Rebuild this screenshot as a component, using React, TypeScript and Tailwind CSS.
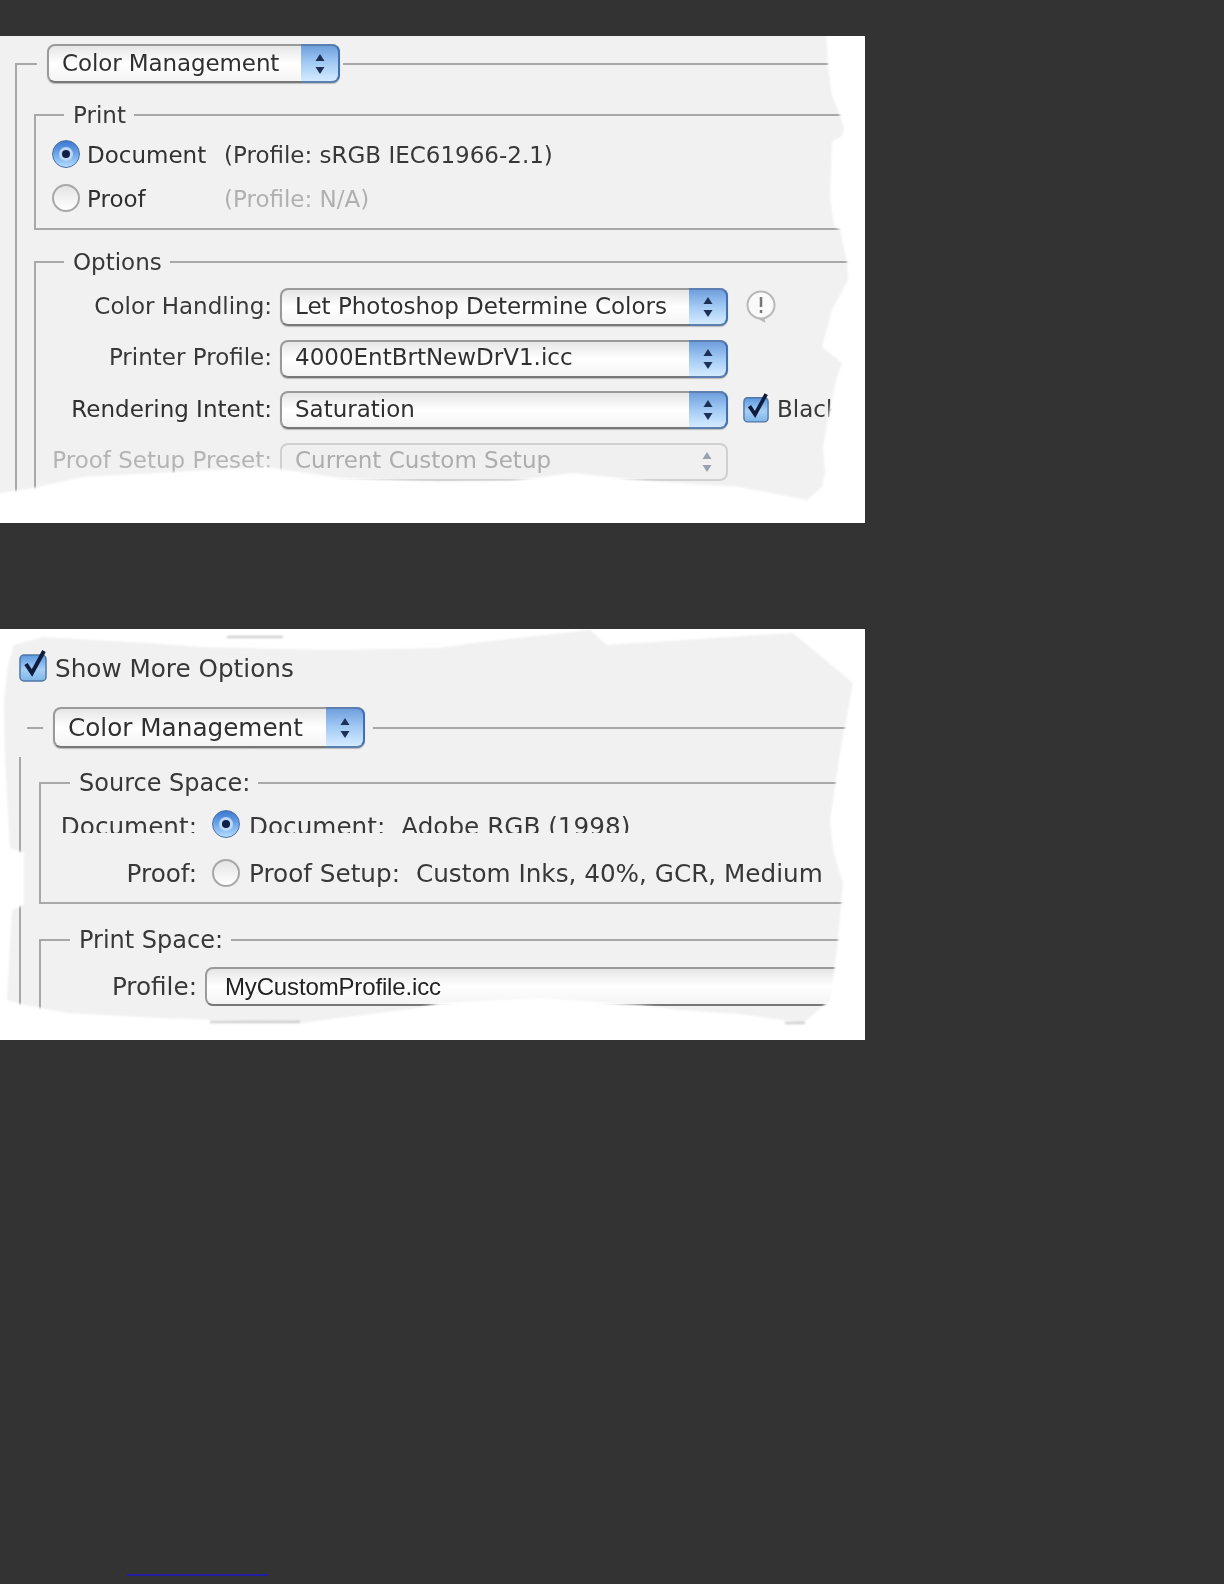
import React from 'react';

const Arrows = ({ dim }: { dim?: boolean }) => (
  <svg width="12" height="26" viewBox="0 0 12 26" className={dim ? 'opacity-40' : ''}>
    <path d="M6 3l4.500 7h-9z" fill="#1c2f55" />
    <path d="M6 23l4.500-7h-9z" fill="#1c2f55" />
  </svg>
);

const Popup = ({ label, disabled, lift, className }: { label: string; disabled?: boolean; lift?: boolean; className: string }) => (
  <div
    className={`flex h-full items-center justify-between rounded-[8px] border-2 ${
      disabled
        ? 'border-[#d0d0d0] bg-[#f0f0f0] text-[#adadad]'
        : 'border-[#9a9a9a] border-b-[#777777] bg-linear-to-b from-[#e6e6e6] via-white to-[#f4f4f4] shadow-[0_1px_1px_#bbbbbb] text-[#303030]'
    } ${className}`}
  >
    <span className={`pl-[13px] whitespace-nowrap ${lift ? '-mt-[2px]' : ''}`}>{label}</span>
    {disabled ? (
      <span className="flex h-full w-[39px] shrink-0 items-center justify-center">
        <Arrows dim />
      </span>
    ) : (
      <span className="-my-[2px] -mr-[2px] flex h-[calc(100%+4px)] w-[39px] shrink-0 items-center justify-center rounded-r-[8px] border-2 border-l-0 border-[#5c7fb0] border-r-[#3f6fb5] bg-linear-to-b from-[#6f9fdc] via-[#a4cbf5] to-[#d4ebff]">
        <Arrows />
      </span>
    )}
  </div>
);

const Radio = ({ on }: { on?: boolean }) =>
  on ? (
    <span className="flex h-[28px] w-[28px] shrink-0 items-center justify-center rounded-full border border-[#4d6f9f] bg-linear-to-b from-[#3c78cf] via-[#6ca6ea] to-[#b4dcff]">
      <span className="flex h-[14px] w-[14px] items-center justify-center rounded-full bg-[#bcd6f4]">
        <span className="h-[8px] w-[8px] rounded-full bg-[#0f1f45]" />
      </span>
    </span>
  ) : (
    <span className="block h-[28px] w-[28px] shrink-0 rounded-full border-2 border-[#a8a8a8] bg-linear-to-b from-[#e4e4e4] to-white" />
  );

const Check = ({ size }: { size: number }) => (
  <svg width={size} height={size + 5} viewBox="0 0 28 33" className="shrink-0">
    <defs>
      <linearGradient id="checkFill" x1="0" y1="0" x2="0" y2="1">
        <stop offset="0" stopColor="#5b97e0" />
        <stop offset="0.55" stopColor="#a6cef5" />
        <stop offset="1" stopColor="#7fb6e8" />
      </linearGradient>
    </defs>
    <rect x="1" y="6" width="26" height="26" rx="4" fill="url(#checkFill)" stroke="#4f77a8" strokeWidth="1.5" />
    <path d="M7 15l6 9L25 2" fill="none" stroke="#0e1c3d" strokeWidth="4" />
  </svg>
);

const Warning = () => (
  <svg width="32" height="34" viewBox="0 0 32 34" className="ml-[17px] -mt-[3px] shrink-0">
    <path d="M12 28l7 4-1-5z" fill="#f7f7f7" stroke="#b8b8b8" strokeWidth="2" />
    <circle cx="16" cy="16" r="13.500" fill="#f9f9f9" stroke="#b8b8b8" strokeWidth="2" />
    <path d="M16 8v10" stroke="#777777" strokeWidth="2.500" />
    <path d="M16 21v3" stroke="#777777" strokeWidth="2.500" />
  </svg>
);

const Legend = ({ text, inset, className }: { text: string; inset: string; className?: string }) => (
  <div className={`-mt-[14px] h-[26px] w-fit bg-[#f1f1f1] pr-[8px] pl-[9px] leading-[26px] text-[#383838] ${inset} ${className ?? ''}`}>{text}</div>
);

const Torn = ({ box, inner, marks }: { box: string; inner: string; marks?: string }) => (
  <svg viewBox={box} className="pointer-events-none absolute -top-[10px] -left-[10px] h-[calc(100%+20px)] w-[calc(100%+20px)] blur-[1.2px]">
    <path fillRule="evenodd" fill="#ffffff" d={`M-50 -50H1000V1200H-50Z M${inner}Z`} />
    {marks && <path d={marks} stroke="#b4b4b4" strokeWidth="1.500" fill="none" />}
  </svg>
);

const LINE = 'h-[2px] bg-[#a8a8a8]';

const PrintPanel = () => (
  <div className="relative h-[487px] w-[865px] overflow-hidden bg-[#f1f1f1] pt-[8px] pl-[15px] text-[23px]">
    <div className="blur-[0.5px]">
      <div className="flex h-[39px] items-center">
        <div className="h-[20.500px] w-[22px] self-end border-t-2 border-l-2 border-[#a8a8a8]" />
        <Popup label="Color Management" className="mr-[3px] ml-[10px] w-[293px] shrink-0 tracking-[-0.1px]" />
        <div className={`flex-1 ${LINE}`} />
      </div>
      <div className="h-[440px] border-l-2 border-[#a8a8a8] pl-[17px] pt-[31px]">
        <div className="border-y-2 border-l-2 border-[#a8a8a8] pb-[12px]">
          <Legend text="Print" inset="ml-[28px]" />
          <div className="mt-[8px] flex h-[36px] items-center pl-[16px]">
            <Radio on />
            <span className="mt-[2px] ml-[7px] w-[137px] text-[#303030]">Document</span>
            <span className="mt-[2px] text-[#383838]">(Profile: sRGB IEC61966-2.1)</span>
          </div>
          <div className="mt-[8px] flex h-[36px] items-center pl-[16px]">
            <Radio />
            <span className="mt-[2px] ml-[7px] w-[137px] text-[#303030]">Proof</span>
            <span className="mt-[2px] text-[#b0b0b0]">(Profile: N/A)</span>
          </div>
        </div>
        <div className="mt-[31px] border-t-2 border-l-2 border-[#a8a8a8] pb-[20px]">
          <Legend text="Options" inset="ml-[28px]" />
          <div className="mt-[13px] flex flex-col gap-[13.500px]">
            <div className="flex h-[38px] items-center">
              <span className="-mt-[2px] w-[236px] text-right text-[#383838]">Color Handling:</span>
              <Popup label="Let Photoshop Determine Colors" lift className="ml-[8px] w-[448px] shrink-0" />
              <Warning />
            </div>
            <div className="flex h-[38px] items-center">
              <span className="-mt-[2px] w-[236px] text-right text-[#383838]">Printer Profile:</span>
              <Popup label="4000EntBrtNewDrV1.icc" lift className="ml-[8px] w-[448px] shrink-0" />
            </div>
            <div className="flex h-[38px] items-center">
              <span className="-mt-[2px] w-[236px] text-right text-[#303030]">Rendering Intent:</span>
              <Popup label="Saturation" lift className="ml-[8px] w-[448px] shrink-0" />
              <span className="-mt-[6px] ml-[15px]">
                <Check size={26} />
              </span>
              <span className="-mt-[2px] ml-[8px] text-[#383838]">Black</span>
            </div>
            <div className="flex h-[38px] items-center">
              <span className="-mt-[2px] w-[236px] text-right text-[#b4b4b4]">Proof Setup Preset:</span>
              <Popup label="Current Custom Setup" disabled lift className="ml-[8px] w-[448px] shrink-0" />
            </div>
          </div>
        </div>
      </div>
    </div>
    <Torn
      box="-10 26 885 507"
      inner="-20 10L825 10L828 66L832 96L838 110L844 128L842 136L832 142L830 196L834 226L840 230L847 262L848 280L832 310L822 347L842 363L836 380L829 413L823 447L825 473L822 487L807 500L740 487L647 481L573 473L510 481L440 482L340 478L267 467L83 477L33 488L0 493L-20 493"
    />
  </div>
);

const SpacePanel = () => (
  <div className="relative mt-[106px] h-[411px] w-[865px] overflow-hidden bg-[#f1f1f1] pt-[24px] pl-[19px] text-[24.700px]">
    <div className="blur-[0.5px]">
      <div className="flex h-[30px] items-center">
        <span className="-mt-[5px]">
          <Check size={28} />
        </span>
        <span className="mt-[2px] ml-[8px] text-[#383838]">Show More Options</span>
      </div>
      <div className="mt-[24px] flex h-[41px] items-center pl-[8px]">
        <div className={`w-[16px] ${LINE}`} />
        <Popup label="Color Management" className="mr-[8px] ml-[10px] w-[312px] shrink-0" />
        <div className={`flex-1 ${LINE}`} />
      </div>
      <div className="mt-[9px] h-[300px] border-l-2 border-[#a8a8a8] pl-[18px] pt-[25px]">
        <div className="border-y-2 border-l-2 border-[#a8a8a8] pb-[15px]">
          <Legend text="Source Space:" inset="ml-[29px]" className="text-[24px]" />
          <div className="mt-[14px] flex h-[28px] items-start">
            <span className="h-[23px] w-[156px] overflow-hidden text-right leading-[34px] text-[#383838]">Document:</span>
            <span className="ml-[15px]">
              <Radio on />
            </span>
            <span className="ml-[9px] h-[23px] overflow-hidden leading-[34px] whitespace-nowrap text-[#383838]">Document:</span>
            <span className="ml-[16px] h-[23px] overflow-hidden leading-[34px] whitespace-nowrap text-[#383838]">Adobe RGB (1998)</span>
          </div>
          <div className="mt-[21px] flex h-[28px] items-center">
            <span className="mt-[2px] w-[156px] text-right text-[#383838]">Proof:</span>
            <span className="ml-[15px]">
              <Radio />
            </span>
            <span className="mt-[2px] ml-[9px] whitespace-nowrap text-[#383838]">Proof Setup:</span>
            <span className="mt-[2px] ml-[16px] whitespace-nowrap text-[#383838]">Custom Inks, 40%, GCR, Medium</span>
          </div>
        </div>
        <div className="mt-[35px] h-[90px] border-t-2 border-l-2 border-[#a8a8a8]">
          <Legend text="Print Space:" inset="ml-[29px]" className="text-[24px]" />
          <div className="mt-[14px] flex h-[39px] items-center">
            <span className="w-[156px] text-right text-[#383838]">Profile:</span>
            <div className="ml-[8px] flex h-full flex-1 items-center rounded-l-[8px] border-2 border-[#9a9a9a] border-b-[#777777] bg-linear-to-b from-[#e6e6e6] via-white to-[#f4f4f4] pl-[18px] font-['Liberation_Sans',sans-serif] text-[24px] tracking-[-0.15px] text-[#222222]">
              MyCustomProfile.icc
            </div>
          </div>
        </div>
      </div>
    </div>
    <Torn
      box="-10 619 885 431"
      inner="8 665L14 645L43 637L93 640L147 643L200 647L333 650L440 648L473 643L590 630L607 645L793 633L853 683L840 753L830 820L833 850L843 883L837 950L830 1000L803 1023L740 1014L680 1010L640 1005L540 998L440 1003L417 1008L300 1023L160 1018L67 1013L20 1004L7 1000L12 910L24 905L24 853L10 848L5 760L4 700"
      marks="M227 637H283M210 1022H300M785 1023H805"
    />
  </div>
);

export default function App() {
  return (
    <div className="min-h-[1584px] bg-[#333333] pt-[36px] font-['DejaVu_Sans',sans-serif]">
      <PrintPanel />
      <SpacePanel />
      <div className="mt-[534px] ml-[127px] h-[2px] w-[141px] bg-[#1f1fa0]" />
    </div>
  );
}
